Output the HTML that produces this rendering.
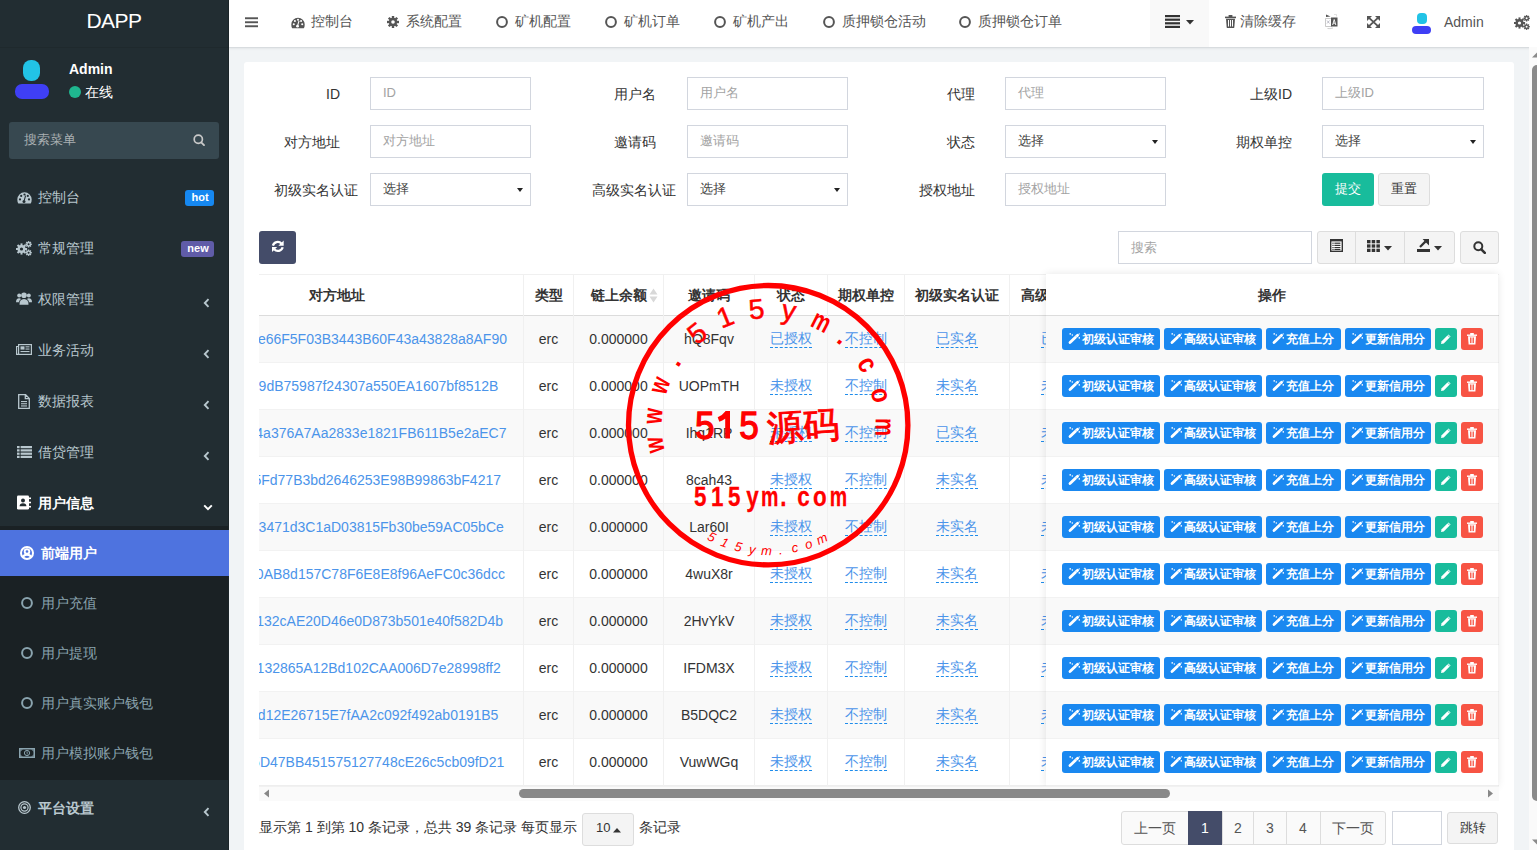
<!DOCTYPE html>
<html><head><meta charset="utf-8">
<style>
*{box-sizing:border-box;margin:0;padding:0}
html,body{width:1537px;height:850px;overflow:hidden}
body{position:relative;font-family:"Liberation Sans",sans-serif;font-size:14px;color:#333;background:#f1f4f6}
.a{position:absolute}
svg{display:block}
/* sidebar */
#sb{left:0;top:0;width:229px;height:850px;background:#222d32;border-right:1px solid #1c2529}
#logo{left:0;top:0;width:228px;height:48px;color:#fff;font-size:21px;letter-spacing:-0.5px;line-height:42px;text-align:center;border-bottom:1px solid #1f292d}
.mi{left:0;width:228px;height:50px;color:#b8c7ce;font-size:14px}
.mi .t{position:absolute;left:38px;top:0;line-height:50px}
.mi .ic{position:absolute;left:17px;top:18px}
.badge{position:absolute;color:#fff;font-size:11px;font-weight:bold;border-radius:3px;height:16px;line-height:15px;text-align:center;padding-left:1px}
.chev{position:absolute;left:203px;top:22px}
.sub{left:0;top:526px;width:228px;height:254px;background:#1a2124}
.si{left:0;width:228px;height:46px;color:#8aa4af}
.si .t{position:absolute;left:41px;top:0;line-height:46px}
/* navbar */
#nav{left:229px;top:0;width:1308px;height:48px;background:#fff;border-bottom:1px solid #d8dcdf;box-shadow:0 1px 2px rgba(0,0,0,.06)}
.nt{position:absolute;top:0;line-height:44px;color:#555;font-size:14px}

.lbl{position:absolute;color:#333;line-height:18px;white-space:nowrap}
.inp{position:absolute;width:161px;height:33px;border:1px solid #d2d6de;background:#fff}
.ph{position:absolute;left:12px;top:6px;line-height:18px;font-size:13px;color:#a3a3a3;white-space:nowrap}
.sel{color:#444}
.caret{position:absolute;right:7px;top:14px;width:0;height:0;border-left:3.5px solid transparent;border-right:3.5px solid transparent;border-top:4.5px solid #222}
.btn{position:absolute;border-radius:3px}

#tbl{left:259px;top:274px;width:1240px;height:527px;overflow:hidden}
.th{position:absolute;top:0;line-height:18px;font-weight:bold;color:#333;white-space:nowrap}
.td{position:absolute;line-height:18px;color:#333;white-space:nowrap}
.lnk{position:absolute;line-height:18px;color:#4b94ea;white-space:nowrap}
.dl{position:absolute;line-height:17px;color:#4b94ea;white-space:nowrap;border-bottom:1px dashed #1f8ceb}
.vl{position:absolute;width:1px;background:#f0f0f0}

.ob{position:absolute;height:22px;border-radius:3px;background:#1a88f0;color:#fff;font-size:12px;font-weight:bold;line-height:22px;white-space:nowrap}
.ob svg{position:absolute;left:6px;top:5px}
.ob span{position:absolute;top:0}
</style></head><body>

<!-- SIDEBAR -->

<div id="sb" class="a">
  <div id="logo" class="a">DAPP</div>
  <!-- user panel -->
  <div class="a" style="left:23px;top:60px;width:17px;height:21px;border-radius:8px;background:#22c3e6"></div>
  <div class="a" style="left:15px;top:84px;width:34px;height:15px;border-radius:7px;background:#3f3ff5"></div>
  <div class="a" style="left:69px;top:60px;color:#fff;font-weight:bold;font-size:14px;line-height:18px">Admin</div>
  <div class="a" style="left:69px;top:86px;width:12px;height:12px;border-radius:6px;background:#1fb68f"></div>
  <div class="a" style="left:85px;top:83px;color:#fff;font-size:14px;line-height:18px">在线</div>
  <!-- search -->
  <div class="a" style="left:9px;top:122px;width:210px;height:37px;border-radius:3px;background:#374850"></div>
  <div class="a" style="left:24px;top:131px;color:#aab0b3;font-size:13px;line-height:18px">搜索菜单</div>
  <svg class="a" style="left:192px;top:133px" width="14" height="14" viewBox="0 0 14 14"><circle cx="6.3" cy="6.2" r="4.1" fill="none" stroke="#c9c9c9" stroke-width="1.7"/><path d="M9.2 9.3 L12 12.1" stroke="#c9c9c9" stroke-width="1.9" stroke-linecap="round"/></svg>
  <!-- menu -->
<svg class="a" style="left:17px;top:192px" width="15" height="12" viewBox="0 0 15 12"><path d="M7.5 0.3 A7.2 7.2 0 0 0 0.3 7.5 Q0.3 10 1.3 11.6 H13.7 Q14.7 10 14.7 7.5 A7.2 7.2 0 0 0 7.5 0.3Z" fill="#b8c7ce"/><circle cx="3" cy="7.4" r="1.1" fill="#222d32"/><circle cx="4.2" cy="3.9" r="1.1" fill="#222d32"/><circle cx="7.5" cy="2.5" r="1.1" fill="#222d32"/><circle cx="10.8" cy="3.9" r="1.1" fill="#222d32"/><circle cx="12" cy="7.4" r="1.1" fill="#222d32"/><path d="M8.6 3.6 L7.2 8.6" stroke="#222d32" stroke-width="1.1"/><circle cx="7" cy="9.4" r="1.5" fill="#222d32"/></svg><div class="a" style="left:38px;top:188px;color:#b8c7ce;line-height:18px">控制台</div><div class="badge" style="left:185px;top:190px;width:29px;background:#1688f1">hot</div><svg class="a" style="left:16px;top:241px" width="16" height="15" viewBox="0 0 16 15"><g fill="#b8c7ce"><circle cx="5.5" cy="8" r="4"/><rect x="4.5" y="2.4" width="2" height="11.2"/><rect x="-0.1" y="7" width="11.2" height="2"/><rect x="4.5" y="2.4" width="2" height="11.2" transform="rotate(45 5.5 8)"/><rect x="4.5" y="2.4" width="2" height="11.2" transform="rotate(-45 5.5 8)"/></g><circle cx="5.5" cy="8" r="1.6" fill="#222d32"/><circle cx="12.6" cy="3.3" r="2.2" fill="#b8c7ce"/><rect x="11.9" y="0.09999999999999964" width="1.4" height="6.4" fill="#b8c7ce" transform="rotate(0 12.6 3.3)"/><rect x="11.9" y="0.09999999999999964" width="1.4" height="6.4" fill="#b8c7ce" transform="rotate(45 12.6 3.3)"/><rect x="11.9" y="0.09999999999999964" width="1.4" height="6.4" fill="#b8c7ce" transform="rotate(90 12.6 3.3)"/><rect x="11.9" y="0.09999999999999964" width="1.4" height="6.4" fill="#b8c7ce" transform="rotate(135 12.6 3.3)"/><circle cx="12.6" cy="3.3" r="1" fill="#222d32"/><circle cx="12.6" cy="11.7" r="2.2" fill="#b8c7ce"/><rect x="11.9" y="8.5" width="1.4" height="6.4" fill="#b8c7ce" transform="rotate(0 12.6 11.7)"/><rect x="11.9" y="8.5" width="1.4" height="6.4" fill="#b8c7ce" transform="rotate(45 12.6 11.7)"/><rect x="11.9" y="8.5" width="1.4" height="6.4" fill="#b8c7ce" transform="rotate(90 12.6 11.7)"/><rect x="11.9" y="8.5" width="1.4" height="6.4" fill="#b8c7ce" transform="rotate(135 12.6 11.7)"/><circle cx="12.6" cy="11.7" r="1" fill="#222d32"/></svg><div class="a" style="left:38px;top:239px;color:#b8c7ce;line-height:18px">常规管理</div><div class="badge" style="left:181px;top:241px;width:33px;background:#605ca8">new</div><svg class="a" style="left:16px;top:292px" width="16" height="13" viewBox="0 0 16 13"><g fill="#b8c7ce"><circle cx="8" cy="3.3" r="2.8"/><path d="M3.5 12.8 Q3.3 7.2 8 7 Q12.7 7.2 12.5 12.8Z"/><circle cx="3.2" cy="3.6" r="2"/><path d="M0 10.2 Q0 6.4 3.2 6.3 Q4.4 6.4 5 7 Q3 8.3 3 10.2Z"/><circle cx="12.8" cy="3.6" r="2"/><path d="M16 10.2 Q16 6.4 12.8 6.3 Q11.6 6.4 11 7 Q13 8.3 13 10.2Z"/></g></svg><div class="a" style="left:38px;top:290px;color:#b8c7ce;line-height:18px">权限管理</div><svg class="a" style="left:203px;top:298px" width="7" height="10" viewBox="0 0 7 10"><path d="M5.5 1.2 L1.8 5 L5.5 8.8" fill="none" stroke="#b8c7ce" stroke-width="1.9"/></svg><svg class="a" style="left:16px;top:344px" width="16" height="11" viewBox="0 0 16 11"><g fill="none" stroke="#b8c7ce" stroke-width="1.2"><rect x="2.6" y="0.6" width="12.8" height="9.8"/><path d="M2.6 2.5 H0.6 V10.4 H2.6"/></g><g fill="#b8c7ce"><rect x="4.5" y="2.3" width="4" height="3.3"/><rect x="9.5" y="2.3" width="4" height="1.1"/><rect x="9.5" y="4.5" width="4" height="1.1"/><rect x="4.5" y="7" width="9" height="1.1"/></g></svg><div class="a" style="left:38px;top:341px;color:#b8c7ce;line-height:18px">业务活动</div><svg class="a" style="left:203px;top:349px" width="7" height="10" viewBox="0 0 7 10"><path d="M5.5 1.2 L1.8 5 L5.5 8.8" fill="none" stroke="#b8c7ce" stroke-width="1.9"/></svg><svg class="a" style="left:18px;top:394px" width="12" height="15" viewBox="0 0 12 15"><path d="M0.7 0.7 H7.6 L11.3 4.4 V14.3 H0.7Z M7.3 0.9 V4.7 H11" fill="none" stroke="#b8c7ce" stroke-width="1.3"/><g fill="#b8c7ce"><rect x="3" y="7" width="6" height="1.1"/><rect x="3" y="9.2" width="6" height="1.1"/><rect x="3" y="11.4" width="6" height="1.1"/></g></svg><div class="a" style="left:38px;top:392px;color:#b8c7ce;line-height:18px">数据报表</div><svg class="a" style="left:203px;top:400px" width="7" height="10" viewBox="0 0 7 10"><path d="M5.5 1.2 L1.8 5 L5.5 8.8" fill="none" stroke="#b8c7ce" stroke-width="1.9"/></svg><svg class="a" style="left:17px;top:446px" width="15" height="12" viewBox="0 0 15 12"><g fill="#b8c7ce"><rect x="0" y="0" width="2.6" height="2.2"/><rect x="0" y="3.3" width="2.6" height="2.2"/><rect x="0" y="6.6" width="2.6" height="2.2"/><rect x="0" y="9.8" width="2.6" height="2.2"/><rect x="3.6" y="0" width="11.4" height="2.2"/><rect x="3.6" y="3.3" width="11.4" height="2.2"/><rect x="3.6" y="6.6" width="11.4" height="2.2"/><rect x="3.6" y="9.8" width="11.4" height="2.2"/></g></svg><div class="a" style="left:38px;top:443px;color:#b8c7ce;line-height:18px">借贷管理</div><svg class="a" style="left:203px;top:451px" width="7" height="10" viewBox="0 0 7 10"><path d="M5.5 1.2 L1.8 5 L5.5 8.8" fill="none" stroke="#b8c7ce" stroke-width="1.9"/></svg><svg class="a" style="left:17px;top:495px" width="14" height="15" viewBox="0 0 14 15"><rect x="0" y="0.5" width="12" height="14" rx="1.2" fill="#fff"/><g fill="#fff"><rect x="12" y="2.5" width="2" height="1.6"/><rect x="12" y="6.7" width="2" height="1.6"/><rect x="12" y="10.9" width="2" height="1.6"/></g><circle cx="6" cy="5.6" r="2" fill="#222d32"/><path d="M2.6 11.2 Q2.6 8.3 6 8.2 Q9.4 8.3 9.4 11.2Z" fill="#222d32"/></svg><div class="a" style="left:38px;top:494px;color:#fff;font-weight:bold;line-height:18px">用户信息</div><svg class="a" style="left:203px;top:504px" width="10" height="7" viewBox="0 0 10 7"><path d="M1.2 1.3 L5 5.2 L8.8 1.3" fill="none" stroke="#fff" stroke-width="1.9"/></svg><div class="a sub"></div><div class="a" style="left:0;top:530px;width:229px;height:46px;background:#4e73df"></div><svg class="a" style="left:20px;top:546px" width="14" height="14" viewBox="0 0 14 14"><circle cx="7" cy="7" r="6" fill="none" stroke="#fff" stroke-width="2"/><circle cx="7" cy="5.5" r="2.3" fill="none" stroke="#fff" stroke-width="1.9"/><path d="M2.8 11.4 Q3.8 8.6 7 8.6 Q10.2 8.6 11.2 11.4" fill="none" stroke="#fff" stroke-width="2.2"/></svg><div class="a" style="left:41px;top:544px;color:#fff;font-weight:bold;line-height:18px">前端用户</div><svg class="a" style="left:21px;top:597px" width="12" height="12" viewBox="0 0 12 12"><circle cx="6" cy="6" r="4.9" fill="none" stroke="#8aa4af" stroke-width="2"/></svg><div class="a" style="left:41px;top:594px;color:#8aa4af;line-height:18px">用户充值</div><svg class="a" style="left:21px;top:647px" width="12" height="12" viewBox="0 0 12 12"><circle cx="6" cy="6" r="4.9" fill="none" stroke="#8aa4af" stroke-width="2"/></svg><div class="a" style="left:41px;top:644px;color:#8aa4af;line-height:18px">用户提现</div><svg class="a" style="left:21px;top:697px" width="12" height="12" viewBox="0 0 12 12"><circle cx="6" cy="6" r="4.9" fill="none" stroke="#8aa4af" stroke-width="2"/></svg><div class="a" style="left:41px;top:694px;color:#8aa4af;line-height:18px">用户真实账户钱包</div><svg class="a" style="left:19px;top:748px" width="16" height="10" viewBox="0 0 16 10"><rect x="0" y="0" width="16" height="10" fill="#8aa4af"/><path d="M1.5 1.5 H14.5 V8.5 H1.5Z" fill="#1a2124"/><path d="M1.5 1.5 H4 Q1.5 2.5 1.5 4Z M14.5 1.5 H12 Q14.5 2.5 14.5 4Z M1.5 8.5 H4 Q1.5 7.5 1.5 6Z M14.5 8.5 H12 Q14.5 7.5 14.5 6Z" fill="#8aa4af"/><circle cx="8" cy="5" r="2.6" fill="none" stroke="#8aa4af" stroke-width="1"/><path d="M7.6 3.9 L8.2 3.6 V6.4" fill="none" stroke="#8aa4af" stroke-width="0.8"/></svg><div class="a" style="left:41px;top:744px;color:#8aa4af;line-height:18px">用户模拟账户钱包</div><svg class="a" style="left:18px;top:801px" width="13" height="13" viewBox="0 0 13 13"><circle cx="6.5" cy="6.5" r="5.8" fill="none" stroke="#b8c7ce" stroke-width="1.3"/><circle cx="6.5" cy="6.5" r="3.6" fill="none" stroke="#b8c7ce" stroke-width="1.2"/><circle cx="6.5" cy="6.5" r="1.6" fill="#b8c7ce"/></svg><div class="a" style="left:38px;top:799px;color:#b8c7ce;font-weight:bold;line-height:18px">平台设置</div><svg class="a" style="left:203px;top:807px" width="7" height="10" viewBox="0 0 7 10"><path d="M5.5 1.2 L1.8 5 L5.5 8.8" fill="none" stroke="#b8c7ce" stroke-width="1.9"/></svg>
</div>


<!-- NAVBAR -->
<div id="nav" class="a"></div>
<svg class="a" style="left:245px;top:17px" width="13" height="11" viewBox="0 0 13 11"><g fill="#555"><rect x="0" y="0.3" width="13" height="1.9"/><rect x="0" y="4.3" width="13" height="1.9"/><rect x="0" y="8.3" width="13" height="1.9"/></g></svg><svg class="a" style="left:291px;top:17px" width="14" height="12" viewBox="0 0 15 12"><path d="M7.5 0.3 A7.2 7.2 0 0 0 0.3 7.5 Q0.3 10 1.3 11.6 H13.7 Q14.7 10 14.7 7.5 A7.2 7.2 0 0 0 7.5 0.3Z" fill="#555"/><circle cx="3" cy="7.4" r="1.1" fill="#fff"/><circle cx="4.2" cy="3.9" r="1.1" fill="#fff"/><circle cx="7.5" cy="2.5" r="1.1" fill="#fff"/><circle cx="10.8" cy="3.9" r="1.1" fill="#fff"/><circle cx="12" cy="7.4" r="1.1" fill="#fff"/><path d="M8.6 3.6 L7.2 8.6" stroke="#fff" stroke-width="1.1"/><circle cx="7" cy="9.4" r="1.5" fill="#fff"/></svg><div class="a" style="left:311px;top:12px;color:#555;line-height:18px">控制台</div><svg class="a" style="left:387px;top:16px" width="12" height="12" viewBox="0 0 12 12"><g fill="#555"><circle cx="6" cy="6" r="4.2"/><rect x="4.8" y="0" width="2.4" height="12"/><rect x="0" y="4.8" width="12" height="2.4"/><rect x="4.8" y="0" width="2.4" height="12" transform="rotate(45 6 6)"/><rect x="4.8" y="0" width="2.4" height="12" transform="rotate(-45 6 6)"/></g><circle cx="6" cy="6" r="1.8" fill="#fff"/></svg><div class="a" style="left:406px;top:12px;color:#555;line-height:18px">系统配置</div><svg class="a" style="left:496px;top:16px" width="12" height="12" viewBox="0 0 12 12"><circle cx="6" cy="6" r="4.9" fill="none" stroke="#555" stroke-width="2"/></svg><div class="a" style="left:515px;top:12px;color:#555;line-height:18px">矿机配置</div><svg class="a" style="left:605px;top:16px" width="12" height="12" viewBox="0 0 12 12"><circle cx="6" cy="6" r="4.9" fill="none" stroke="#555" stroke-width="2"/></svg><div class="a" style="left:624px;top:12px;color:#555;line-height:18px">矿机订单</div><svg class="a" style="left:714px;top:16px" width="12" height="12" viewBox="0 0 12 12"><circle cx="6" cy="6" r="4.9" fill="none" stroke="#555" stroke-width="2"/></svg><div class="a" style="left:733px;top:12px;color:#555;line-height:18px">矿机产出</div><svg class="a" style="left:823px;top:16px" width="12" height="12" viewBox="0 0 12 12"><circle cx="6" cy="6" r="4.9" fill="none" stroke="#555" stroke-width="2"/></svg><div class="a" style="left:842px;top:12px;color:#555;line-height:18px">质押锁仓活动</div><svg class="a" style="left:959px;top:16px" width="12" height="12" viewBox="0 0 12 12"><circle cx="6" cy="6" r="4.9" fill="none" stroke="#555" stroke-width="2"/></svg><div class="a" style="left:978px;top:12px;color:#555;line-height:18px">质押锁仓订单</div><div class="a" style="left:1150px;top:0;width:59px;height:47px;background:#f9f9f9"></div><svg class="a" style="left:1165px;top:15px" width="15" height="13" viewBox="0 0 15 13"><g fill="#333"><rect x="0" y="0" width="15" height="2.2"/><rect x="0" y="3.6" width="15" height="2.2"/><rect x="0" y="7.2" width="15" height="2.2"/><rect x="0" y="10.8" width="15" height="2.2"/></g></svg><svg class="a" style="left:1186px;top:20px" width="8" height="5" viewBox="0 0 8 5"><path d="M0 0 H8 L4 4.5Z" fill="#333"/></svg><svg class="a" style="left:1225px;top:15px" width="11" height="13" viewBox="0 0 11 13"><g fill="#555"><rect x="0" y="1.6" width="11" height="1.6"/><rect x="3.6" y="0" width="3.8" height="2"/><path d="M1 3.8 H10 L9.3 12.6 Q9.2 13 8.8 13 H2.2 Q1.8 13 1.7 12.6Z"/></g><g fill="#fff"><rect x="3" y="5" width="1" height="6.5"/><rect x="5" y="5" width="1" height="6.5"/><rect x="7" y="5" width="1" height="6.5"/></g></svg><div class="a" style="left:1240px;top:12px;color:#555;line-height:18px">清除缓存</div><svg class="a" style="left:1325px;top:14px" width="14" height="16" viewBox="0 0 14 16"><path d="M0.5 4.5 H6.5 V12.5 H0.5Z" fill="#fff" stroke="#bbb" stroke-width="0.8"/><path d="M1 0.5 L5.5 2.5 L1 3Z" fill="#555"/><rect x="6" y="3.5" width="6.5" height="9" fill="#555"/><path d="M7.6 11 L9.2 5.5 L10.8 11 M8.2 9.2 H10.2" fill="none" stroke="#fff" stroke-width="0.9"/><path d="M2 6.5 L4.5 9.5 M4.5 6.5 L2 9.5" stroke="#99a" stroke-width="0.6"/><path d="M2.5 14.5 Q5 15 8 14" fill="none" stroke="#bbb" stroke-width="0.7"/><path d="M9 0.5 H11.5 V2.5" fill="none" stroke="#ccc" stroke-width="0.6"/></svg><svg class="a" style="left:1367px;top:16px" width="13" height="12" viewBox="0 0 13 12"><g fill="#555"><path d="M0 0 H5 L0 5Z"/><path d="M13 0 V5 L8 0Z"/><path d="M0 12 V7 L5 12Z"/><path d="M13 12 H8 L13 7Z"/></g><path d="M1.5 1.4 L11.5 10.6 M11.5 1.4 L1.5 10.6" stroke="#555" stroke-width="1.9"/></svg><div class="a" style="left:1417px;top:12.5px;width:9.5px;height:11.5px;border-radius:4px;background:#22c3e6"></div><div class="a" style="left:1412px;top:26px;width:19px;height:8px;border-radius:4px;background:#3f3ff5"></div><div class="a" style="left:1444px;top:13px;color:#555;line-height:18px">Admin</div><svg class="a" style="left:1514px;top:14.5px" width="16" height="15" viewBox="0 0 16 15"><g fill="#555"><circle cx="5.5" cy="8" r="4"/><rect x="4.5" y="2.4" width="2" height="11.2"/><rect x="-0.1" y="7" width="11.2" height="2"/><rect x="4.5" y="2.4" width="2" height="11.2" transform="rotate(45 5.5 8)"/><rect x="4.5" y="2.4" width="2" height="11.2" transform="rotate(-45 5.5 8)"/></g><circle cx="5.5" cy="8" r="1.6" fill="#fff"/><circle cx="12.6" cy="3.3" r="2.2" fill="#555"/><rect x="11.9" y="0.09999999999999964" width="1.4" height="6.4" fill="#555" transform="rotate(0 12.6 3.3)"/><rect x="11.9" y="0.09999999999999964" width="1.4" height="6.4" fill="#555" transform="rotate(45 12.6 3.3)"/><rect x="11.9" y="0.09999999999999964" width="1.4" height="6.4" fill="#555" transform="rotate(90 12.6 3.3)"/><rect x="11.9" y="0.09999999999999964" width="1.4" height="6.4" fill="#555" transform="rotate(135 12.6 3.3)"/><circle cx="12.6" cy="3.3" r="1" fill="#fff"/><circle cx="12.6" cy="11.7" r="2.2" fill="#555"/><rect x="11.9" y="8.5" width="1.4" height="6.4" fill="#555" transform="rotate(0 12.6 11.7)"/><rect x="11.9" y="8.5" width="1.4" height="6.4" fill="#555" transform="rotate(45 12.6 11.7)"/><rect x="11.9" y="8.5" width="1.4" height="6.4" fill="#555" transform="rotate(90 12.6 11.7)"/><rect x="11.9" y="8.5" width="1.4" height="6.4" fill="#555" transform="rotate(135 12.6 11.7)"/><circle cx="12.6" cy="11.7" r="1" fill="#fff"/></svg>

<!-- PANEL -->
<div class="a" style="left:244px;top:62px;width:1270px;height:800px;background:#fff;border-radius:3px"></div>
<div class="lbl" style="right:1197px;top:85px">ID</div><div class="inp" style="left:370px;top:77px;width:161px"><div class="ph">ID</div></div><div class="lbl" style="right:881px;top:85px">用户名</div><div class="inp" style="left:687px;top:77px;width:161px"><div class="ph">用户名</div></div><div class="lbl" style="right:562px;top:85px">代理</div><div class="inp" style="left:1005px;top:77px;width:161px"><div class="ph">代理</div></div><div class="lbl" style="right:245px;top:85px">上级ID</div><div class="inp" style="left:1322px;top:77px;width:162px"><div class="ph">上级ID</div></div><div class="lbl" style="right:1197px;top:133px">对方地址</div><div class="inp" style="left:370px;top:125px;width:161px"><div class="ph">对方地址</div></div><div class="lbl" style="right:881px;top:133px">邀请码</div><div class="inp" style="left:687px;top:125px;width:161px"><div class="ph">邀请码</div></div><div class="lbl" style="right:562px;top:133px">状态</div><div class="inp" style="left:1005px;top:125px;width:161px"><div class="ph sel">选择</div><div class="caret"></div></div><div class="lbl" style="right:245px;top:133px">期权单控</div><div class="inp" style="left:1322px;top:125px;width:162px"><div class="ph sel">选择</div><div class="caret"></div></div><div class="lbl" style="left:274px;top:181px">初级实名认证</div><div class="inp" style="left:370px;top:173px;width:161px"><div class="ph sel">选择</div><div class="caret"></div></div><div class="lbl" style="left:592px;top:181px">高级实名认证</div><div class="inp" style="left:687px;top:173px;width:161px"><div class="ph sel">选择</div><div class="caret"></div></div><div class="lbl" style="right:562px;top:181px">授权地址</div><div class="inp" style="left:1005px;top:173px;width:161px"><div class="ph">授权地址</div></div><div class="btn" style="left:1322px;top:173px;width:52px;height:33px;background:#18bc9c;color:#fff;text-align:center;line-height:31px;font-size:13px">提交</div><div class="btn" style="left:1378px;top:173px;width:52px;height:33px;background:#f4f4f4;border:1px solid #ddd;color:#333;text-align:center;line-height:30px;font-size:13px">重置</div>
<div class="btn" style="left:259px;top:231px;width:37px;height:33px;background:#444c69"></div><svg class="a" style="left:271px;top:240px" width="14" height="13" viewBox="0 0 14 13"><path d="M1.9 5.6 A5 5 0 0 1 10.4 3.6" fill="none" stroke="#fff" stroke-width="2.3"/><path d="M7.4 5.7 H12.7 V0.4Z" fill="#fff"/><path d="M11.7 7.2 A5 5 0 0 1 3.2 9.3" fill="none" stroke="#fff" stroke-width="2.3"/><path d="M1 7.1 H6.2 L1 12.1Z" fill="#fff"/></svg><div class="inp" style="left:1118px;top:231px;width:194px;height:33px"><div class="ph" style="top:7px">搜索</div></div><div class="btn" style="left:1317px;top:231px;width:138px;height:33px;background:#f4f4f4;border:1px solid #ddd"></div><div class="a" style="left:1355px;top:232px;width:1px;height:31px;background:#ddd"></div><div class="a" style="left:1404px;top:232px;width:1px;height:31px;background:#ddd"></div><svg class="a" style="left:1330px;top:239px" width="13" height="13" viewBox="0 0 13 13"><rect x="0.7" y="0.7" width="11.6" height="11.6" fill="#fff" stroke="#333" stroke-width="1.4"/><rect x="0" y="0" width="13" height="2.4" fill="#333"/><g fill="#333"><rect x="2.4" y="3.6" width="1.2" height="1.2"/><rect x="4.4" y="3.6" width="6" height="1.2"/><rect x="2.4" y="5.8" width="1.2" height="1.2"/><rect x="4.4" y="5.8" width="6" height="1.2"/><rect x="2.4" y="8" width="1.2" height="1.2"/><rect x="4.4" y="8" width="6" height="1.2"/><rect x="2.4" y="10" width="1.2" height="1"/><rect x="4.4" y="10" width="6" height="1"/></g></svg><svg class="a" style="left:1367px;top:240px" width="13" height="12" viewBox="0 0 13 12"><g fill="#333"><rect x="0" y="0" width="3.5" height="3.3"/><rect x="0" y="4.35" width="3.5" height="3.3"/><rect x="0" y="8.7" width="3.5" height="3.3"/><rect x="4.7" y="0" width="3.5" height="3.3"/><rect x="4.7" y="4.35" width="3.5" height="3.3"/><rect x="4.7" y="8.7" width="3.5" height="3.3"/><rect x="9.4" y="0" width="3.5" height="3.3"/><rect x="9.4" y="4.35" width="3.5" height="3.3"/><rect x="9.4" y="8.7" width="3.5" height="3.3"/></g></svg><svg class="a" style="left:1384px;top:245.5px" width="8" height="5" viewBox="0 0 8 5"><path d="M0 0 H8 L4 4.5Z" fill="#333"/></svg><svg class="a" style="left:1417px;top:239px" width="13" height="13" viewBox="0 0 13 13"><rect x="0" y="10" width="13" height="3" fill="#333"/><path d="M3 8 L8.6 2.4" stroke="#333" stroke-width="2.2"/><path d="M5.6 0 H12 V6.4Z" fill="#333"/></svg><svg class="a" style="left:1434px;top:245.5px" width="8" height="5" viewBox="0 0 8 5"><path d="M0 0 H8 L4 4.5Z" fill="#333"/></svg><div class="btn" style="left:1460px;top:231px;width:39px;height:33px;background:#f4f4f4;border:1px solid #ddd"></div><svg class="a" style="left:1473px;top:241px" width="13" height="13" viewBox="0 0 13 13"><circle cx="5.3" cy="5.3" r="4" fill="none" stroke="#333" stroke-width="2"/><path d="M8.3 8.3 L11.8 11.8" stroke="#333" stroke-width="2.6" stroke-linecap="round"/></svg>
<div id="tbl" class="a"><div class="a" style="left:0;top:0;width:1240px;height:1px;background:#f0f0f0"></div><div class="a" style="left:0;top:41px;width:1240px;height:1px;background:#dcdcdc"></div><div class="a" style="left:0;top:42px;width:1240px;height:47px;background:#f9f9f9"></div><div class="a" style="left:0;top:89px;width:1240px;height:47px;background:#fff"></div><div class="a" style="left:0;top:88px;width:1240px;height:1px;background:#f2f2f2"></div><div class="a" style="left:0;top:136px;width:1240px;height:47px;background:#f9f9f9"></div><div class="a" style="left:0;top:135px;width:1240px;height:1px;background:#f2f2f2"></div><div class="a" style="left:0;top:183px;width:1240px;height:47px;background:#fff"></div><div class="a" style="left:0;top:182px;width:1240px;height:1px;background:#f2f2f2"></div><div class="a" style="left:0;top:230px;width:1240px;height:47px;background:#f9f9f9"></div><div class="a" style="left:0;top:229px;width:1240px;height:1px;background:#f2f2f2"></div><div class="a" style="left:0;top:277px;width:1240px;height:47px;background:#fff"></div><div class="a" style="left:0;top:276px;width:1240px;height:1px;background:#f2f2f2"></div><div class="a" style="left:0;top:324px;width:1240px;height:47px;background:#f9f9f9"></div><div class="a" style="left:0;top:323px;width:1240px;height:1px;background:#f2f2f2"></div><div class="a" style="left:0;top:371px;width:1240px;height:47px;background:#fff"></div><div class="a" style="left:0;top:370px;width:1240px;height:1px;background:#f2f2f2"></div><div class="a" style="left:0;top:418px;width:1240px;height:47px;background:#f9f9f9"></div><div class="a" style="left:0;top:417px;width:1240px;height:1px;background:#f2f2f2"></div><div class="a" style="left:0;top:465px;width:1240px;height:47px;background:#fff"></div><div class="a" style="left:0;top:464px;width:1240px;height:1px;background:#f2f2f2"></div><div class="a" style="left:0;top:511px;width:1240px;height:1px;background:#eee"></div><div class="vl" style="left:264px;top:0;height:512px"></div><div class="vl" style="left:314px;top:0;height:512px"></div><div class="vl" style="left:404px;top:0;height:512px"></div><div class="vl" style="left:495px;top:0;height:512px"></div><div class="vl" style="left:568px;top:0;height:512px"></div><div class="vl" style="left:645px;top:0;height:512px"></div><div class="vl" style="left:750px;top:0;height:512px"></div><div class="vl" style="left:856px;top:0;height:512px"></div><div class="th" style="left:-22px;top:12px;width:200px;text-align:center">对方地址</div><div class="th" style="left:259.5px;top:12px;width:60px;text-align:center">类型</div><div class="th" style="left:332px;top:12px">链上余额</div><svg class="a" style="left:390px;top:14px" width="9" height="15" viewBox="0 0 9 15"><path d="M4.5 0.5 L8.5 6.5 H0.5Z M4.5 14.5 L8.5 8.5 H0.5Z" fill="#d8d8d8"/></svg><div class="th" style="left:410px;top:12px;width:80px;text-align:center">邀请码</div><div class="th" style="left:497px;top:12px;width:70px;text-align:center">状态</div><div class="th" style="left:569px;top:12px;width:76px;text-align:center">期权单控</div><div class="th" style="left:648px;top:12px;width:100px;text-align:center">初级实名认证</div><div class="th" style="left:762px;top:12px">高级实名认证</div><div class="lnk" style="right:992px;top:56px">0x7a2B9cA01dE53e66F5F03B3443B60F43a43828a8AF90</div><div class="td" style="left:264.5px;top:56px;width:50px;text-align:center">erc</div><div class="td" style="left:314.5px;top:56px;width:90px;text-align:center">0.000000</div><div class="td" style="left:405px;top:56px;width:90px;text-align:center">hQ8Fqv</div><div class="dl" style="left:511px;top:56px">已授权</div><div class="dl" style="left:586px;top:56px">不控制</div><div class="dl" style="left:677px;top:56px">已实名</div><div class="dl" style="left:782px;top:56px">已实名</div><div class="lnk" style="right:1000.6px;top:103px">0x5cE19aB83fD079dB75987f24307a550EA1607bf8512B</div><div class="td" style="left:264.5px;top:103px;width:50px;text-align:center">erc</div><div class="td" style="left:314.5px;top:103px;width:90px;text-align:center">0.000000</div><div class="td" style="left:405px;top:103px;width:90px;text-align:center">UOPmTH</div><div class="dl" style="left:511px;top:103px">未授权</div><div class="dl" style="left:586px;top:103px">不控制</div><div class="dl" style="left:677px;top:103px">未实名</div><div class="dl" style="left:782px;top:103px">未实名</div><div class="lnk" style="right:992.5px;top:150px">0x3bF26dC14aE904a376A7Aa2833e1821FB611B5e2aEC7</div><div class="td" style="left:264.5px;top:150px;width:50px;text-align:center">erc</div><div class="td" style="left:314.5px;top:150px;width:90px;text-align:center">0.000000</div><div class="td" style="left:405px;top:150px;width:90px;text-align:center">Ihq1RP</div><div class="dl" style="left:511px;top:150px">未授权</div><div class="dl" style="left:586px;top:150px">不控制</div><div class="dl" style="left:677px;top:150px">已实名</div><div class="dl" style="left:782px;top:150px">未实名</div><div class="lnk" style="right:998px;top:197px">0x91aD4eF23bC65Fd77B3bd2646253E98B99863bF4217</div><div class="td" style="left:264.5px;top:197px;width:50px;text-align:center">erc</div><div class="td" style="left:314.5px;top:197px;width:90px;text-align:center">0.000000</div><div class="td" style="left:405px;top:197px;width:90px;text-align:center">8cah43</div><div class="dl" style="left:511px;top:197px">未授权</div><div class="dl" style="left:586px;top:197px">不控制</div><div class="dl" style="left:677px;top:197px">未实名</div><div class="dl" style="left:782px;top:197px">未实名</div><div class="lnk" style="right:995.2px;top:244px">0x2eC87bA45dF123471d3C1aD03815Fb30be59AC05bCe</div><div class="td" style="left:264.5px;top:244px;width:50px;text-align:center">erc</div><div class="td" style="left:314.5px;top:244px;width:90px;text-align:center">0.000000</div><div class="td" style="left:405px;top:244px;width:90px;text-align:center">Lar60I</div><div class="dl" style="left:511px;top:244px">未授权</div><div class="dl" style="left:586px;top:244px">不控制</div><div class="dl" style="left:677px;top:244px">未实名</div><div class="dl" style="left:782px;top:244px">未实名</div><div class="lnk" style="right:994.1px;top:291px">0x6fB34aD29eC80AB8d157C78F6E8E8f96AeFC0c36dcc</div><div class="td" style="left:264.5px;top:291px;width:50px;text-align:center">erc</div><div class="td" style="left:314.5px;top:291px;width:90px;text-align:center">0.000000</div><div class="td" style="left:405px;top:291px;width:90px;text-align:center">4wuX8r</div><div class="dl" style="left:511px;top:291px">未授权</div><div class="dl" style="left:586px;top:291px">不控制</div><div class="dl" style="left:677px;top:291px">未实名</div><div class="dl" style="left:782px;top:291px">未实名</div><div class="lnk" style="right:996px;top:338px">0x8dA52cE71fB3132cAE20D46e0D873b501e40f582D4b</div><div class="td" style="left:264.5px;top:338px;width:50px;text-align:center">erc</div><div class="td" style="left:314.5px;top:338px;width:90px;text-align:center">0.000000</div><div class="td" style="left:405px;top:338px;width:90px;text-align:center">2HvYkV</div><div class="dl" style="left:511px;top:338px">未授权</div><div class="dl" style="left:586px;top:338px">不控制</div><div class="dl" style="left:677px;top:338px">未实名</div><div class="dl" style="left:782px;top:338px">未实名</div><div class="lnk" style="right:998.2px;top:385px">0x4aC91bF36eD2132865A12Bd102CAA006D7e28998ff2</div><div class="td" style="left:264.5px;top:385px;width:50px;text-align:center">erc</div><div class="td" style="left:314.5px;top:385px;width:90px;text-align:center">0.000000</div><div class="td" style="left:405px;top:385px;width:90px;text-align:center">IFDM3X</div><div class="dl" style="left:511px;top:385px">未授权</div><div class="dl" style="left:586px;top:385px">不控制</div><div class="dl" style="left:677px;top:385px">未实名</div><div class="dl" style="left:782px;top:385px">未实名</div><div class="lnk" style="right:1000.6px;top:432px">0x7bE25dA84cF9d12E26715E7fAA2c092f492ab0191B5</div><div class="td" style="left:264.5px;top:432px;width:50px;text-align:center">erc</div><div class="td" style="left:314.5px;top:432px;width:90px;text-align:center">0.000000</div><div class="td" style="left:405px;top:432px;width:90px;text-align:center">B5DQC2</div><div class="dl" style="left:511px;top:432px">未授权</div><div class="dl" style="left:586px;top:432px">不控制</div><div class="dl" style="left:677px;top:432px">未实名</div><div class="dl" style="left:782px;top:432px">未实名</div><div class="lnk" style="right:994.7px;top:479px">0x1cF63eB92aD5D47BB451575127748cE26c5cb09fD21</div><div class="td" style="left:264.5px;top:479px;width:50px;text-align:center">erc</div><div class="td" style="left:314.5px;top:479px;width:90px;text-align:center">0.000000</div><div class="td" style="left:405px;top:479px;width:90px;text-align:center">VuwWGq</div><div class="dl" style="left:511px;top:479px">未授权</div><div class="dl" style="left:586px;top:479px">不控制</div><div class="dl" style="left:677px;top:479px">未实名</div><div class="dl" style="left:782px;top:479px">未实名</div><div class="a" style="left:0;top:512px;width:1240px;height:15px;background:#fafafa;border-top:1px solid #f1f1f1;z-index:2"></div><svg class="a" style="left:4px;top:515px;z-index:3" width="7" height="9" viewBox="0 0 7 9"><path d="M6 0.5 V8.5 L1 4.5Z" fill="#888"/></svg><svg class="a" style="left:1228px;top:515px;z-index:3" width="7" height="9" viewBox="0 0 7 9"><path d="M1 0.5 V8.5 L6 4.5Z" fill="#888"/></svg><div class="a" style="left:260px;top:515px;width:651px;height:9px;border-radius:4.5px;background:#888;z-index:3"></div></div>
<div class="a" style="left:1046px;top:274px;width:452px;height:512px;background:#fff;box-shadow:0 0 8px rgba(0,0,0,.1)"><div class="a" style="left:0;top:41px;width:452px;height:1px;background:#dcdcdc"></div><div class="th" style="left:186px;top:12px;width:80px;text-align:center">操作</div><div class="a" style="left:0;top:42px;width:452px;height:47px;background:#f9f9f9"></div><div class="ob" style="left:16px;top:54px;width:98px"><svg width="13" height="12" viewBox="0 0 13 12"><path d="M2 9.6 L9.6 2.2" stroke="#fff" stroke-width="2.8" stroke-linecap="round"/><g fill="#fff"><circle cx="2.2" cy="0.9" r="0.8"/><circle cx="4.3" cy="1.9" r="0.75"/><circle cx="11.3" cy="4.9" r="0.8"/><circle cx="11.2" cy="0.9" r="0.6"/></g><path d="M8.2 3.6 L9.2 4.6" stroke="#1a88f0" stroke-width="0.7"/></svg><span style="left:20px">初级认证审核</span></div><div class="ob" style="left:118px;top:54px;width:98px"><svg width="13" height="12" viewBox="0 0 13 12"><path d="M2 9.6 L9.6 2.2" stroke="#fff" stroke-width="2.8" stroke-linecap="round"/><g fill="#fff"><circle cx="2.2" cy="0.9" r="0.8"/><circle cx="4.3" cy="1.9" r="0.75"/><circle cx="11.3" cy="4.9" r="0.8"/><circle cx="11.2" cy="0.9" r="0.6"/></g><path d="M8.2 3.6 L9.2 4.6" stroke="#1a88f0" stroke-width="0.7"/></svg><span style="left:20px">高级认证审核</span></div><div class="ob" style="left:220px;top:54px;width:75px"><svg width="13" height="12" viewBox="0 0 13 12"><path d="M2 9.6 L9.6 2.2" stroke="#fff" stroke-width="2.8" stroke-linecap="round"/><g fill="#fff"><circle cx="2.2" cy="0.9" r="0.8"/><circle cx="4.3" cy="1.9" r="0.75"/><circle cx="11.3" cy="4.9" r="0.8"/><circle cx="11.2" cy="0.9" r="0.6"/></g><path d="M8.2 3.6 L9.2 4.6" stroke="#1a88f0" stroke-width="0.7"/></svg><span style="left:20px">充值上分</span></div><div class="ob" style="left:299px;top:54px;width:86px"><svg width="13" height="12" viewBox="0 0 13 12"><path d="M2 9.6 L9.6 2.2" stroke="#fff" stroke-width="2.8" stroke-linecap="round"/><g fill="#fff"><circle cx="2.2" cy="0.9" r="0.8"/><circle cx="4.3" cy="1.9" r="0.75"/><circle cx="11.3" cy="4.9" r="0.8"/><circle cx="11.2" cy="0.9" r="0.6"/></g><path d="M8.2 3.6 L9.2 4.6" stroke="#1a88f0" stroke-width="0.7"/></svg><span style="left:20px">更新信用分</span></div><div class="ob" style="left:389px;top:54px;width:22px;background:#18bc9c"><svg width="12" height="12" viewBox="0 0 12 12" style="left:5px;top:5px"><path d="M1 11 L1.6 8.2 L8.4 1.4 L10.6 3.6 L3.8 10.4Z" fill="#fff"/><path d="M7.6 2.2 L9.8 4.4" stroke="#18bc9c" stroke-width="0.8"/></svg></div><div class="ob" style="left:415px;top:54px;width:22px;background:#f75444"><svg width="10" height="12" viewBox="0 0 10 12" style="left:6px;top:5px"><g fill="#fff"><rect x="0" y="1.5" width="10" height="1.4"/><rect x="3.2" y="0" width="3.6" height="2"/><path d="M1 3.3 H9 L8.4 11.6 H1.6Z"/></g><g fill="#f75444"><rect x="3" y="4.5" width="0.9" height="5.6"/><rect x="4.55" y="4.5" width="0.9" height="5.6"/><rect x="6.1" y="4.5" width="0.9" height="5.6"/></g></svg></div><div class="a" style="left:0;top:89px;width:452px;height:47px;background:#fff"></div><div class="a" style="left:0;top:88px;width:452px;height:1px;background:#f2f2f2"></div><div class="ob" style="left:16px;top:101px;width:98px"><svg width="13" height="12" viewBox="0 0 13 12"><path d="M2 9.6 L9.6 2.2" stroke="#fff" stroke-width="2.8" stroke-linecap="round"/><g fill="#fff"><circle cx="2.2" cy="0.9" r="0.8"/><circle cx="4.3" cy="1.9" r="0.75"/><circle cx="11.3" cy="4.9" r="0.8"/><circle cx="11.2" cy="0.9" r="0.6"/></g><path d="M8.2 3.6 L9.2 4.6" stroke="#1a88f0" stroke-width="0.7"/></svg><span style="left:20px">初级认证审核</span></div><div class="ob" style="left:118px;top:101px;width:98px"><svg width="13" height="12" viewBox="0 0 13 12"><path d="M2 9.6 L9.6 2.2" stroke="#fff" stroke-width="2.8" stroke-linecap="round"/><g fill="#fff"><circle cx="2.2" cy="0.9" r="0.8"/><circle cx="4.3" cy="1.9" r="0.75"/><circle cx="11.3" cy="4.9" r="0.8"/><circle cx="11.2" cy="0.9" r="0.6"/></g><path d="M8.2 3.6 L9.2 4.6" stroke="#1a88f0" stroke-width="0.7"/></svg><span style="left:20px">高级认证审核</span></div><div class="ob" style="left:220px;top:101px;width:75px"><svg width="13" height="12" viewBox="0 0 13 12"><path d="M2 9.6 L9.6 2.2" stroke="#fff" stroke-width="2.8" stroke-linecap="round"/><g fill="#fff"><circle cx="2.2" cy="0.9" r="0.8"/><circle cx="4.3" cy="1.9" r="0.75"/><circle cx="11.3" cy="4.9" r="0.8"/><circle cx="11.2" cy="0.9" r="0.6"/></g><path d="M8.2 3.6 L9.2 4.6" stroke="#1a88f0" stroke-width="0.7"/></svg><span style="left:20px">充值上分</span></div><div class="ob" style="left:299px;top:101px;width:86px"><svg width="13" height="12" viewBox="0 0 13 12"><path d="M2 9.6 L9.6 2.2" stroke="#fff" stroke-width="2.8" stroke-linecap="round"/><g fill="#fff"><circle cx="2.2" cy="0.9" r="0.8"/><circle cx="4.3" cy="1.9" r="0.75"/><circle cx="11.3" cy="4.9" r="0.8"/><circle cx="11.2" cy="0.9" r="0.6"/></g><path d="M8.2 3.6 L9.2 4.6" stroke="#1a88f0" stroke-width="0.7"/></svg><span style="left:20px">更新信用分</span></div><div class="ob" style="left:389px;top:101px;width:22px;background:#18bc9c"><svg width="12" height="12" viewBox="0 0 12 12" style="left:5px;top:5px"><path d="M1 11 L1.6 8.2 L8.4 1.4 L10.6 3.6 L3.8 10.4Z" fill="#fff"/><path d="M7.6 2.2 L9.8 4.4" stroke="#18bc9c" stroke-width="0.8"/></svg></div><div class="ob" style="left:415px;top:101px;width:22px;background:#f75444"><svg width="10" height="12" viewBox="0 0 10 12" style="left:6px;top:5px"><g fill="#fff"><rect x="0" y="1.5" width="10" height="1.4"/><rect x="3.2" y="0" width="3.6" height="2"/><path d="M1 3.3 H9 L8.4 11.6 H1.6Z"/></g><g fill="#f75444"><rect x="3" y="4.5" width="0.9" height="5.6"/><rect x="4.55" y="4.5" width="0.9" height="5.6"/><rect x="6.1" y="4.5" width="0.9" height="5.6"/></g></svg></div><div class="a" style="left:0;top:136px;width:452px;height:47px;background:#f9f9f9"></div><div class="a" style="left:0;top:135px;width:452px;height:1px;background:#f2f2f2"></div><div class="ob" style="left:16px;top:148px;width:98px"><svg width="13" height="12" viewBox="0 0 13 12"><path d="M2 9.6 L9.6 2.2" stroke="#fff" stroke-width="2.8" stroke-linecap="round"/><g fill="#fff"><circle cx="2.2" cy="0.9" r="0.8"/><circle cx="4.3" cy="1.9" r="0.75"/><circle cx="11.3" cy="4.9" r="0.8"/><circle cx="11.2" cy="0.9" r="0.6"/></g><path d="M8.2 3.6 L9.2 4.6" stroke="#1a88f0" stroke-width="0.7"/></svg><span style="left:20px">初级认证审核</span></div><div class="ob" style="left:118px;top:148px;width:98px"><svg width="13" height="12" viewBox="0 0 13 12"><path d="M2 9.6 L9.6 2.2" stroke="#fff" stroke-width="2.8" stroke-linecap="round"/><g fill="#fff"><circle cx="2.2" cy="0.9" r="0.8"/><circle cx="4.3" cy="1.9" r="0.75"/><circle cx="11.3" cy="4.9" r="0.8"/><circle cx="11.2" cy="0.9" r="0.6"/></g><path d="M8.2 3.6 L9.2 4.6" stroke="#1a88f0" stroke-width="0.7"/></svg><span style="left:20px">高级认证审核</span></div><div class="ob" style="left:220px;top:148px;width:75px"><svg width="13" height="12" viewBox="0 0 13 12"><path d="M2 9.6 L9.6 2.2" stroke="#fff" stroke-width="2.8" stroke-linecap="round"/><g fill="#fff"><circle cx="2.2" cy="0.9" r="0.8"/><circle cx="4.3" cy="1.9" r="0.75"/><circle cx="11.3" cy="4.9" r="0.8"/><circle cx="11.2" cy="0.9" r="0.6"/></g><path d="M8.2 3.6 L9.2 4.6" stroke="#1a88f0" stroke-width="0.7"/></svg><span style="left:20px">充值上分</span></div><div class="ob" style="left:299px;top:148px;width:86px"><svg width="13" height="12" viewBox="0 0 13 12"><path d="M2 9.6 L9.6 2.2" stroke="#fff" stroke-width="2.8" stroke-linecap="round"/><g fill="#fff"><circle cx="2.2" cy="0.9" r="0.8"/><circle cx="4.3" cy="1.9" r="0.75"/><circle cx="11.3" cy="4.9" r="0.8"/><circle cx="11.2" cy="0.9" r="0.6"/></g><path d="M8.2 3.6 L9.2 4.6" stroke="#1a88f0" stroke-width="0.7"/></svg><span style="left:20px">更新信用分</span></div><div class="ob" style="left:389px;top:148px;width:22px;background:#18bc9c"><svg width="12" height="12" viewBox="0 0 12 12" style="left:5px;top:5px"><path d="M1 11 L1.6 8.2 L8.4 1.4 L10.6 3.6 L3.8 10.4Z" fill="#fff"/><path d="M7.6 2.2 L9.8 4.4" stroke="#18bc9c" stroke-width="0.8"/></svg></div><div class="ob" style="left:415px;top:148px;width:22px;background:#f75444"><svg width="10" height="12" viewBox="0 0 10 12" style="left:6px;top:5px"><g fill="#fff"><rect x="0" y="1.5" width="10" height="1.4"/><rect x="3.2" y="0" width="3.6" height="2"/><path d="M1 3.3 H9 L8.4 11.6 H1.6Z"/></g><g fill="#f75444"><rect x="3" y="4.5" width="0.9" height="5.6"/><rect x="4.55" y="4.5" width="0.9" height="5.6"/><rect x="6.1" y="4.5" width="0.9" height="5.6"/></g></svg></div><div class="a" style="left:0;top:183px;width:452px;height:47px;background:#fff"></div><div class="a" style="left:0;top:182px;width:452px;height:1px;background:#f2f2f2"></div><div class="ob" style="left:16px;top:195px;width:98px"><svg width="13" height="12" viewBox="0 0 13 12"><path d="M2 9.6 L9.6 2.2" stroke="#fff" stroke-width="2.8" stroke-linecap="round"/><g fill="#fff"><circle cx="2.2" cy="0.9" r="0.8"/><circle cx="4.3" cy="1.9" r="0.75"/><circle cx="11.3" cy="4.9" r="0.8"/><circle cx="11.2" cy="0.9" r="0.6"/></g><path d="M8.2 3.6 L9.2 4.6" stroke="#1a88f0" stroke-width="0.7"/></svg><span style="left:20px">初级认证审核</span></div><div class="ob" style="left:118px;top:195px;width:98px"><svg width="13" height="12" viewBox="0 0 13 12"><path d="M2 9.6 L9.6 2.2" stroke="#fff" stroke-width="2.8" stroke-linecap="round"/><g fill="#fff"><circle cx="2.2" cy="0.9" r="0.8"/><circle cx="4.3" cy="1.9" r="0.75"/><circle cx="11.3" cy="4.9" r="0.8"/><circle cx="11.2" cy="0.9" r="0.6"/></g><path d="M8.2 3.6 L9.2 4.6" stroke="#1a88f0" stroke-width="0.7"/></svg><span style="left:20px">高级认证审核</span></div><div class="ob" style="left:220px;top:195px;width:75px"><svg width="13" height="12" viewBox="0 0 13 12"><path d="M2 9.6 L9.6 2.2" stroke="#fff" stroke-width="2.8" stroke-linecap="round"/><g fill="#fff"><circle cx="2.2" cy="0.9" r="0.8"/><circle cx="4.3" cy="1.9" r="0.75"/><circle cx="11.3" cy="4.9" r="0.8"/><circle cx="11.2" cy="0.9" r="0.6"/></g><path d="M8.2 3.6 L9.2 4.6" stroke="#1a88f0" stroke-width="0.7"/></svg><span style="left:20px">充值上分</span></div><div class="ob" style="left:299px;top:195px;width:86px"><svg width="13" height="12" viewBox="0 0 13 12"><path d="M2 9.6 L9.6 2.2" stroke="#fff" stroke-width="2.8" stroke-linecap="round"/><g fill="#fff"><circle cx="2.2" cy="0.9" r="0.8"/><circle cx="4.3" cy="1.9" r="0.75"/><circle cx="11.3" cy="4.9" r="0.8"/><circle cx="11.2" cy="0.9" r="0.6"/></g><path d="M8.2 3.6 L9.2 4.6" stroke="#1a88f0" stroke-width="0.7"/></svg><span style="left:20px">更新信用分</span></div><div class="ob" style="left:389px;top:195px;width:22px;background:#18bc9c"><svg width="12" height="12" viewBox="0 0 12 12" style="left:5px;top:5px"><path d="M1 11 L1.6 8.2 L8.4 1.4 L10.6 3.6 L3.8 10.4Z" fill="#fff"/><path d="M7.6 2.2 L9.8 4.4" stroke="#18bc9c" stroke-width="0.8"/></svg></div><div class="ob" style="left:415px;top:195px;width:22px;background:#f75444"><svg width="10" height="12" viewBox="0 0 10 12" style="left:6px;top:5px"><g fill="#fff"><rect x="0" y="1.5" width="10" height="1.4"/><rect x="3.2" y="0" width="3.6" height="2"/><path d="M1 3.3 H9 L8.4 11.6 H1.6Z"/></g><g fill="#f75444"><rect x="3" y="4.5" width="0.9" height="5.6"/><rect x="4.55" y="4.5" width="0.9" height="5.6"/><rect x="6.1" y="4.5" width="0.9" height="5.6"/></g></svg></div><div class="a" style="left:0;top:230px;width:452px;height:47px;background:#f9f9f9"></div><div class="a" style="left:0;top:229px;width:452px;height:1px;background:#f2f2f2"></div><div class="ob" style="left:16px;top:242px;width:98px"><svg width="13" height="12" viewBox="0 0 13 12"><path d="M2 9.6 L9.6 2.2" stroke="#fff" stroke-width="2.8" stroke-linecap="round"/><g fill="#fff"><circle cx="2.2" cy="0.9" r="0.8"/><circle cx="4.3" cy="1.9" r="0.75"/><circle cx="11.3" cy="4.9" r="0.8"/><circle cx="11.2" cy="0.9" r="0.6"/></g><path d="M8.2 3.6 L9.2 4.6" stroke="#1a88f0" stroke-width="0.7"/></svg><span style="left:20px">初级认证审核</span></div><div class="ob" style="left:118px;top:242px;width:98px"><svg width="13" height="12" viewBox="0 0 13 12"><path d="M2 9.6 L9.6 2.2" stroke="#fff" stroke-width="2.8" stroke-linecap="round"/><g fill="#fff"><circle cx="2.2" cy="0.9" r="0.8"/><circle cx="4.3" cy="1.9" r="0.75"/><circle cx="11.3" cy="4.9" r="0.8"/><circle cx="11.2" cy="0.9" r="0.6"/></g><path d="M8.2 3.6 L9.2 4.6" stroke="#1a88f0" stroke-width="0.7"/></svg><span style="left:20px">高级认证审核</span></div><div class="ob" style="left:220px;top:242px;width:75px"><svg width="13" height="12" viewBox="0 0 13 12"><path d="M2 9.6 L9.6 2.2" stroke="#fff" stroke-width="2.8" stroke-linecap="round"/><g fill="#fff"><circle cx="2.2" cy="0.9" r="0.8"/><circle cx="4.3" cy="1.9" r="0.75"/><circle cx="11.3" cy="4.9" r="0.8"/><circle cx="11.2" cy="0.9" r="0.6"/></g><path d="M8.2 3.6 L9.2 4.6" stroke="#1a88f0" stroke-width="0.7"/></svg><span style="left:20px">充值上分</span></div><div class="ob" style="left:299px;top:242px;width:86px"><svg width="13" height="12" viewBox="0 0 13 12"><path d="M2 9.6 L9.6 2.2" stroke="#fff" stroke-width="2.8" stroke-linecap="round"/><g fill="#fff"><circle cx="2.2" cy="0.9" r="0.8"/><circle cx="4.3" cy="1.9" r="0.75"/><circle cx="11.3" cy="4.9" r="0.8"/><circle cx="11.2" cy="0.9" r="0.6"/></g><path d="M8.2 3.6 L9.2 4.6" stroke="#1a88f0" stroke-width="0.7"/></svg><span style="left:20px">更新信用分</span></div><div class="ob" style="left:389px;top:242px;width:22px;background:#18bc9c"><svg width="12" height="12" viewBox="0 0 12 12" style="left:5px;top:5px"><path d="M1 11 L1.6 8.2 L8.4 1.4 L10.6 3.6 L3.8 10.4Z" fill="#fff"/><path d="M7.6 2.2 L9.8 4.4" stroke="#18bc9c" stroke-width="0.8"/></svg></div><div class="ob" style="left:415px;top:242px;width:22px;background:#f75444"><svg width="10" height="12" viewBox="0 0 10 12" style="left:6px;top:5px"><g fill="#fff"><rect x="0" y="1.5" width="10" height="1.4"/><rect x="3.2" y="0" width="3.6" height="2"/><path d="M1 3.3 H9 L8.4 11.6 H1.6Z"/></g><g fill="#f75444"><rect x="3" y="4.5" width="0.9" height="5.6"/><rect x="4.55" y="4.5" width="0.9" height="5.6"/><rect x="6.1" y="4.5" width="0.9" height="5.6"/></g></svg></div><div class="a" style="left:0;top:277px;width:452px;height:47px;background:#fff"></div><div class="a" style="left:0;top:276px;width:452px;height:1px;background:#f2f2f2"></div><div class="ob" style="left:16px;top:289px;width:98px"><svg width="13" height="12" viewBox="0 0 13 12"><path d="M2 9.6 L9.6 2.2" stroke="#fff" stroke-width="2.8" stroke-linecap="round"/><g fill="#fff"><circle cx="2.2" cy="0.9" r="0.8"/><circle cx="4.3" cy="1.9" r="0.75"/><circle cx="11.3" cy="4.9" r="0.8"/><circle cx="11.2" cy="0.9" r="0.6"/></g><path d="M8.2 3.6 L9.2 4.6" stroke="#1a88f0" stroke-width="0.7"/></svg><span style="left:20px">初级认证审核</span></div><div class="ob" style="left:118px;top:289px;width:98px"><svg width="13" height="12" viewBox="0 0 13 12"><path d="M2 9.6 L9.6 2.2" stroke="#fff" stroke-width="2.8" stroke-linecap="round"/><g fill="#fff"><circle cx="2.2" cy="0.9" r="0.8"/><circle cx="4.3" cy="1.9" r="0.75"/><circle cx="11.3" cy="4.9" r="0.8"/><circle cx="11.2" cy="0.9" r="0.6"/></g><path d="M8.2 3.6 L9.2 4.6" stroke="#1a88f0" stroke-width="0.7"/></svg><span style="left:20px">高级认证审核</span></div><div class="ob" style="left:220px;top:289px;width:75px"><svg width="13" height="12" viewBox="0 0 13 12"><path d="M2 9.6 L9.6 2.2" stroke="#fff" stroke-width="2.8" stroke-linecap="round"/><g fill="#fff"><circle cx="2.2" cy="0.9" r="0.8"/><circle cx="4.3" cy="1.9" r="0.75"/><circle cx="11.3" cy="4.9" r="0.8"/><circle cx="11.2" cy="0.9" r="0.6"/></g><path d="M8.2 3.6 L9.2 4.6" stroke="#1a88f0" stroke-width="0.7"/></svg><span style="left:20px">充值上分</span></div><div class="ob" style="left:299px;top:289px;width:86px"><svg width="13" height="12" viewBox="0 0 13 12"><path d="M2 9.6 L9.6 2.2" stroke="#fff" stroke-width="2.8" stroke-linecap="round"/><g fill="#fff"><circle cx="2.2" cy="0.9" r="0.8"/><circle cx="4.3" cy="1.9" r="0.75"/><circle cx="11.3" cy="4.9" r="0.8"/><circle cx="11.2" cy="0.9" r="0.6"/></g><path d="M8.2 3.6 L9.2 4.6" stroke="#1a88f0" stroke-width="0.7"/></svg><span style="left:20px">更新信用分</span></div><div class="ob" style="left:389px;top:289px;width:22px;background:#18bc9c"><svg width="12" height="12" viewBox="0 0 12 12" style="left:5px;top:5px"><path d="M1 11 L1.6 8.2 L8.4 1.4 L10.6 3.6 L3.8 10.4Z" fill="#fff"/><path d="M7.6 2.2 L9.8 4.4" stroke="#18bc9c" stroke-width="0.8"/></svg></div><div class="ob" style="left:415px;top:289px;width:22px;background:#f75444"><svg width="10" height="12" viewBox="0 0 10 12" style="left:6px;top:5px"><g fill="#fff"><rect x="0" y="1.5" width="10" height="1.4"/><rect x="3.2" y="0" width="3.6" height="2"/><path d="M1 3.3 H9 L8.4 11.6 H1.6Z"/></g><g fill="#f75444"><rect x="3" y="4.5" width="0.9" height="5.6"/><rect x="4.55" y="4.5" width="0.9" height="5.6"/><rect x="6.1" y="4.5" width="0.9" height="5.6"/></g></svg></div><div class="a" style="left:0;top:324px;width:452px;height:47px;background:#f9f9f9"></div><div class="a" style="left:0;top:323px;width:452px;height:1px;background:#f2f2f2"></div><div class="ob" style="left:16px;top:336px;width:98px"><svg width="13" height="12" viewBox="0 0 13 12"><path d="M2 9.6 L9.6 2.2" stroke="#fff" stroke-width="2.8" stroke-linecap="round"/><g fill="#fff"><circle cx="2.2" cy="0.9" r="0.8"/><circle cx="4.3" cy="1.9" r="0.75"/><circle cx="11.3" cy="4.9" r="0.8"/><circle cx="11.2" cy="0.9" r="0.6"/></g><path d="M8.2 3.6 L9.2 4.6" stroke="#1a88f0" stroke-width="0.7"/></svg><span style="left:20px">初级认证审核</span></div><div class="ob" style="left:118px;top:336px;width:98px"><svg width="13" height="12" viewBox="0 0 13 12"><path d="M2 9.6 L9.6 2.2" stroke="#fff" stroke-width="2.8" stroke-linecap="round"/><g fill="#fff"><circle cx="2.2" cy="0.9" r="0.8"/><circle cx="4.3" cy="1.9" r="0.75"/><circle cx="11.3" cy="4.9" r="0.8"/><circle cx="11.2" cy="0.9" r="0.6"/></g><path d="M8.2 3.6 L9.2 4.6" stroke="#1a88f0" stroke-width="0.7"/></svg><span style="left:20px">高级认证审核</span></div><div class="ob" style="left:220px;top:336px;width:75px"><svg width="13" height="12" viewBox="0 0 13 12"><path d="M2 9.6 L9.6 2.2" stroke="#fff" stroke-width="2.8" stroke-linecap="round"/><g fill="#fff"><circle cx="2.2" cy="0.9" r="0.8"/><circle cx="4.3" cy="1.9" r="0.75"/><circle cx="11.3" cy="4.9" r="0.8"/><circle cx="11.2" cy="0.9" r="0.6"/></g><path d="M8.2 3.6 L9.2 4.6" stroke="#1a88f0" stroke-width="0.7"/></svg><span style="left:20px">充值上分</span></div><div class="ob" style="left:299px;top:336px;width:86px"><svg width="13" height="12" viewBox="0 0 13 12"><path d="M2 9.6 L9.6 2.2" stroke="#fff" stroke-width="2.8" stroke-linecap="round"/><g fill="#fff"><circle cx="2.2" cy="0.9" r="0.8"/><circle cx="4.3" cy="1.9" r="0.75"/><circle cx="11.3" cy="4.9" r="0.8"/><circle cx="11.2" cy="0.9" r="0.6"/></g><path d="M8.2 3.6 L9.2 4.6" stroke="#1a88f0" stroke-width="0.7"/></svg><span style="left:20px">更新信用分</span></div><div class="ob" style="left:389px;top:336px;width:22px;background:#18bc9c"><svg width="12" height="12" viewBox="0 0 12 12" style="left:5px;top:5px"><path d="M1 11 L1.6 8.2 L8.4 1.4 L10.6 3.6 L3.8 10.4Z" fill="#fff"/><path d="M7.6 2.2 L9.8 4.4" stroke="#18bc9c" stroke-width="0.8"/></svg></div><div class="ob" style="left:415px;top:336px;width:22px;background:#f75444"><svg width="10" height="12" viewBox="0 0 10 12" style="left:6px;top:5px"><g fill="#fff"><rect x="0" y="1.5" width="10" height="1.4"/><rect x="3.2" y="0" width="3.6" height="2"/><path d="M1 3.3 H9 L8.4 11.6 H1.6Z"/></g><g fill="#f75444"><rect x="3" y="4.5" width="0.9" height="5.6"/><rect x="4.55" y="4.5" width="0.9" height="5.6"/><rect x="6.1" y="4.5" width="0.9" height="5.6"/></g></svg></div><div class="a" style="left:0;top:371px;width:452px;height:47px;background:#fff"></div><div class="a" style="left:0;top:370px;width:452px;height:1px;background:#f2f2f2"></div><div class="ob" style="left:16px;top:383px;width:98px"><svg width="13" height="12" viewBox="0 0 13 12"><path d="M2 9.6 L9.6 2.2" stroke="#fff" stroke-width="2.8" stroke-linecap="round"/><g fill="#fff"><circle cx="2.2" cy="0.9" r="0.8"/><circle cx="4.3" cy="1.9" r="0.75"/><circle cx="11.3" cy="4.9" r="0.8"/><circle cx="11.2" cy="0.9" r="0.6"/></g><path d="M8.2 3.6 L9.2 4.6" stroke="#1a88f0" stroke-width="0.7"/></svg><span style="left:20px">初级认证审核</span></div><div class="ob" style="left:118px;top:383px;width:98px"><svg width="13" height="12" viewBox="0 0 13 12"><path d="M2 9.6 L9.6 2.2" stroke="#fff" stroke-width="2.8" stroke-linecap="round"/><g fill="#fff"><circle cx="2.2" cy="0.9" r="0.8"/><circle cx="4.3" cy="1.9" r="0.75"/><circle cx="11.3" cy="4.9" r="0.8"/><circle cx="11.2" cy="0.9" r="0.6"/></g><path d="M8.2 3.6 L9.2 4.6" stroke="#1a88f0" stroke-width="0.7"/></svg><span style="left:20px">高级认证审核</span></div><div class="ob" style="left:220px;top:383px;width:75px"><svg width="13" height="12" viewBox="0 0 13 12"><path d="M2 9.6 L9.6 2.2" stroke="#fff" stroke-width="2.8" stroke-linecap="round"/><g fill="#fff"><circle cx="2.2" cy="0.9" r="0.8"/><circle cx="4.3" cy="1.9" r="0.75"/><circle cx="11.3" cy="4.9" r="0.8"/><circle cx="11.2" cy="0.9" r="0.6"/></g><path d="M8.2 3.6 L9.2 4.6" stroke="#1a88f0" stroke-width="0.7"/></svg><span style="left:20px">充值上分</span></div><div class="ob" style="left:299px;top:383px;width:86px"><svg width="13" height="12" viewBox="0 0 13 12"><path d="M2 9.6 L9.6 2.2" stroke="#fff" stroke-width="2.8" stroke-linecap="round"/><g fill="#fff"><circle cx="2.2" cy="0.9" r="0.8"/><circle cx="4.3" cy="1.9" r="0.75"/><circle cx="11.3" cy="4.9" r="0.8"/><circle cx="11.2" cy="0.9" r="0.6"/></g><path d="M8.2 3.6 L9.2 4.6" stroke="#1a88f0" stroke-width="0.7"/></svg><span style="left:20px">更新信用分</span></div><div class="ob" style="left:389px;top:383px;width:22px;background:#18bc9c"><svg width="12" height="12" viewBox="0 0 12 12" style="left:5px;top:5px"><path d="M1 11 L1.6 8.2 L8.4 1.4 L10.6 3.6 L3.8 10.4Z" fill="#fff"/><path d="M7.6 2.2 L9.8 4.4" stroke="#18bc9c" stroke-width="0.8"/></svg></div><div class="ob" style="left:415px;top:383px;width:22px;background:#f75444"><svg width="10" height="12" viewBox="0 0 10 12" style="left:6px;top:5px"><g fill="#fff"><rect x="0" y="1.5" width="10" height="1.4"/><rect x="3.2" y="0" width="3.6" height="2"/><path d="M1 3.3 H9 L8.4 11.6 H1.6Z"/></g><g fill="#f75444"><rect x="3" y="4.5" width="0.9" height="5.6"/><rect x="4.55" y="4.5" width="0.9" height="5.6"/><rect x="6.1" y="4.5" width="0.9" height="5.6"/></g></svg></div><div class="a" style="left:0;top:418px;width:452px;height:47px;background:#f9f9f9"></div><div class="a" style="left:0;top:417px;width:452px;height:1px;background:#f2f2f2"></div><div class="ob" style="left:16px;top:430px;width:98px"><svg width="13" height="12" viewBox="0 0 13 12"><path d="M2 9.6 L9.6 2.2" stroke="#fff" stroke-width="2.8" stroke-linecap="round"/><g fill="#fff"><circle cx="2.2" cy="0.9" r="0.8"/><circle cx="4.3" cy="1.9" r="0.75"/><circle cx="11.3" cy="4.9" r="0.8"/><circle cx="11.2" cy="0.9" r="0.6"/></g><path d="M8.2 3.6 L9.2 4.6" stroke="#1a88f0" stroke-width="0.7"/></svg><span style="left:20px">初级认证审核</span></div><div class="ob" style="left:118px;top:430px;width:98px"><svg width="13" height="12" viewBox="0 0 13 12"><path d="M2 9.6 L9.6 2.2" stroke="#fff" stroke-width="2.8" stroke-linecap="round"/><g fill="#fff"><circle cx="2.2" cy="0.9" r="0.8"/><circle cx="4.3" cy="1.9" r="0.75"/><circle cx="11.3" cy="4.9" r="0.8"/><circle cx="11.2" cy="0.9" r="0.6"/></g><path d="M8.2 3.6 L9.2 4.6" stroke="#1a88f0" stroke-width="0.7"/></svg><span style="left:20px">高级认证审核</span></div><div class="ob" style="left:220px;top:430px;width:75px"><svg width="13" height="12" viewBox="0 0 13 12"><path d="M2 9.6 L9.6 2.2" stroke="#fff" stroke-width="2.8" stroke-linecap="round"/><g fill="#fff"><circle cx="2.2" cy="0.9" r="0.8"/><circle cx="4.3" cy="1.9" r="0.75"/><circle cx="11.3" cy="4.9" r="0.8"/><circle cx="11.2" cy="0.9" r="0.6"/></g><path d="M8.2 3.6 L9.2 4.6" stroke="#1a88f0" stroke-width="0.7"/></svg><span style="left:20px">充值上分</span></div><div class="ob" style="left:299px;top:430px;width:86px"><svg width="13" height="12" viewBox="0 0 13 12"><path d="M2 9.6 L9.6 2.2" stroke="#fff" stroke-width="2.8" stroke-linecap="round"/><g fill="#fff"><circle cx="2.2" cy="0.9" r="0.8"/><circle cx="4.3" cy="1.9" r="0.75"/><circle cx="11.3" cy="4.9" r="0.8"/><circle cx="11.2" cy="0.9" r="0.6"/></g><path d="M8.2 3.6 L9.2 4.6" stroke="#1a88f0" stroke-width="0.7"/></svg><span style="left:20px">更新信用分</span></div><div class="ob" style="left:389px;top:430px;width:22px;background:#18bc9c"><svg width="12" height="12" viewBox="0 0 12 12" style="left:5px;top:5px"><path d="M1 11 L1.6 8.2 L8.4 1.4 L10.6 3.6 L3.8 10.4Z" fill="#fff"/><path d="M7.6 2.2 L9.8 4.4" stroke="#18bc9c" stroke-width="0.8"/></svg></div><div class="ob" style="left:415px;top:430px;width:22px;background:#f75444"><svg width="10" height="12" viewBox="0 0 10 12" style="left:6px;top:5px"><g fill="#fff"><rect x="0" y="1.5" width="10" height="1.4"/><rect x="3.2" y="0" width="3.6" height="2"/><path d="M1 3.3 H9 L8.4 11.6 H1.6Z"/></g><g fill="#f75444"><rect x="3" y="4.5" width="0.9" height="5.6"/><rect x="4.55" y="4.5" width="0.9" height="5.6"/><rect x="6.1" y="4.5" width="0.9" height="5.6"/></g></svg></div><div class="a" style="left:0;top:465px;width:452px;height:47px;background:#fff"></div><div class="a" style="left:0;top:464px;width:452px;height:1px;background:#f2f2f2"></div><div class="ob" style="left:16px;top:477px;width:98px"><svg width="13" height="12" viewBox="0 0 13 12"><path d="M2 9.6 L9.6 2.2" stroke="#fff" stroke-width="2.8" stroke-linecap="round"/><g fill="#fff"><circle cx="2.2" cy="0.9" r="0.8"/><circle cx="4.3" cy="1.9" r="0.75"/><circle cx="11.3" cy="4.9" r="0.8"/><circle cx="11.2" cy="0.9" r="0.6"/></g><path d="M8.2 3.6 L9.2 4.6" stroke="#1a88f0" stroke-width="0.7"/></svg><span style="left:20px">初级认证审核</span></div><div class="ob" style="left:118px;top:477px;width:98px"><svg width="13" height="12" viewBox="0 0 13 12"><path d="M2 9.6 L9.6 2.2" stroke="#fff" stroke-width="2.8" stroke-linecap="round"/><g fill="#fff"><circle cx="2.2" cy="0.9" r="0.8"/><circle cx="4.3" cy="1.9" r="0.75"/><circle cx="11.3" cy="4.9" r="0.8"/><circle cx="11.2" cy="0.9" r="0.6"/></g><path d="M8.2 3.6 L9.2 4.6" stroke="#1a88f0" stroke-width="0.7"/></svg><span style="left:20px">高级认证审核</span></div><div class="ob" style="left:220px;top:477px;width:75px"><svg width="13" height="12" viewBox="0 0 13 12"><path d="M2 9.6 L9.6 2.2" stroke="#fff" stroke-width="2.8" stroke-linecap="round"/><g fill="#fff"><circle cx="2.2" cy="0.9" r="0.8"/><circle cx="4.3" cy="1.9" r="0.75"/><circle cx="11.3" cy="4.9" r="0.8"/><circle cx="11.2" cy="0.9" r="0.6"/></g><path d="M8.2 3.6 L9.2 4.6" stroke="#1a88f0" stroke-width="0.7"/></svg><span style="left:20px">充值上分</span></div><div class="ob" style="left:299px;top:477px;width:86px"><svg width="13" height="12" viewBox="0 0 13 12"><path d="M2 9.6 L9.6 2.2" stroke="#fff" stroke-width="2.8" stroke-linecap="round"/><g fill="#fff"><circle cx="2.2" cy="0.9" r="0.8"/><circle cx="4.3" cy="1.9" r="0.75"/><circle cx="11.3" cy="4.9" r="0.8"/><circle cx="11.2" cy="0.9" r="0.6"/></g><path d="M8.2 3.6 L9.2 4.6" stroke="#1a88f0" stroke-width="0.7"/></svg><span style="left:20px">更新信用分</span></div><div class="ob" style="left:389px;top:477px;width:22px;background:#18bc9c"><svg width="12" height="12" viewBox="0 0 12 12" style="left:5px;top:5px"><path d="M1 11 L1.6 8.2 L8.4 1.4 L10.6 3.6 L3.8 10.4Z" fill="#fff"/><path d="M7.6 2.2 L9.8 4.4" stroke="#18bc9c" stroke-width="0.8"/></svg></div><div class="ob" style="left:415px;top:477px;width:22px;background:#f75444"><svg width="10" height="12" viewBox="0 0 10 12" style="left:6px;top:5px"><g fill="#fff"><rect x="0" y="1.5" width="10" height="1.4"/><rect x="3.2" y="0" width="3.6" height="2"/><path d="M1 3.3 H9 L8.4 11.6 H1.6Z"/></g><g fill="#f75444"><rect x="3" y="4.5" width="0.9" height="5.6"/><rect x="4.55" y="4.5" width="0.9" height="5.6"/><rect x="6.1" y="4.5" width="0.9" height="5.6"/></g></svg></div><div class="a" style="left:0;top:511px;width:452px;height:1px;background:#eee"></div></div>
<div class="a" style="left:259px;top:818px;line-height:18px;color:#333;white-space:nowrap">显示第 1 到第 10 条记录，总共 39 条记录 每页显示</div><div class="btn" style="left:582px;top:813px;width:52px;height:33px;background:#f4f4f4;border:1px solid #ddd"></div><div class="a" style="left:596px;top:819px;line-height:18px;font-size:13px;color:#333">10</div><svg class="a" style="left:613px;top:827.5px" width="8" height="5" viewBox="0 0 8 5"><path d="M0 4.5 H8 L4 0Z" fill="#333"/></svg><div class="a" style="left:639px;top:818px;line-height:18px;color:#333;white-space:nowrap">条记录</div><div class="a" style="left:1121px;top:811px;width:265px;height:34px;border:1px solid #ddd;border-radius:3px;background:#fafafa"></div><div class="a" style="left:1121px;top:811px;width:67px;height:34px;color:#555;text-align:center;line-height:35px">上一页</div><div class="a" style="left:1188px;top:811px;width:34px;height:34px;background:#444c69;color:#fff;text-align:center;line-height:35px">1</div><div class="a" style="left:1222px;top:811px;width:1px;height:34px;background:#ddd"></div><div class="a" style="left:1222px;top:811px;width:32px;height:34px;color:#555;text-align:center;line-height:35px">2</div><div class="a" style="left:1253px;top:811px;width:1px;height:34px;background:#ddd"></div><div class="a" style="left:1254px;top:811px;width:32px;height:34px;color:#555;text-align:center;line-height:35px">3</div><div class="a" style="left:1286px;top:811px;width:1px;height:34px;background:#ddd"></div><div class="a" style="left:1286px;top:811px;width:34px;height:34px;color:#555;text-align:center;line-height:35px">4</div><div class="a" style="left:1320px;top:811px;width:1px;height:34px;background:#ddd"></div><div class="a" style="left:1320px;top:811px;width:66px;height:34px;color:#555;text-align:center;line-height:35px">下一页</div><div class="inp" style="left:1392px;top:811px;width:50px;height:34px"></div><div class="btn" style="left:1447px;top:812px;width:51px;height:32px;background:#f4f4f4;border:1px solid #ddd;color:#333;text-align:center;line-height:29px;font-size:13px">跳转</div><div class="a" style="left:1529px;top:47px;width:8px;height:803px;background:#fafafa"></div><div class="a" style="left:1532px;top:65px;width:10px;height:736px;border-radius:5px;background:#8a8a8a"></div><svg class="a" style="left:1531px;top:52px" width="6" height="6" viewBox="0 0 6 6"><path d="M1 5.5 L6 0.5 V5.5Z" fill="#8a8a8a"/></svg><svg class="a" style="left:1531px;top:839px" width="6" height="6" viewBox="0 0 6 6"><path d="M1 0.5 L6 5.5 V0.5Z" fill="#8a8a8a"/></svg>
<svg class="a" style="left:618px;top:275px" width="302" height="302" viewBox="618 275 302 302"><circle cx="768.2" cy="425.2" r="139.7" fill="none" stroke="#f00" stroke-width="5.3"/><text transform="translate(663.33,443.58) rotate(-100.0) scale(0.72,1)" text-anchor="middle" font-family="Liberation Sans" font-weight="bold" font-size="28" fill="#f00">w</text><text transform="translate(662.03,416.60) rotate(-85.5) scale(0.72,1)" text-anchor="middle" font-family="Liberation Sans" font-weight="bold" font-size="28" fill="#f00">w</text><text transform="translate(668.15,388.40) rotate(-70.0) scale(0.72,1)" text-anchor="middle" font-family="Liberation Sans" font-weight="bold" font-size="28" fill="#f00">w</text><text transform="translate(679.99,365.17) rotate(-56.0)" text-anchor="middle" font-family="Liberation Sans" font-weight="bold" font-size="26" fill="#f00">.</text><text transform="translate(702.82,340.68) rotate(-38.0)" text-anchor="middle" font-family="Liberation Sans" font-size="28" fill="#f00" stroke="#f00" stroke-width="0.5">5</text><text transform="translate(728.62,325.79) rotate(-22.0)" text-anchor="middle" font-family="Liberation Sans" font-size="28" fill="#f00" stroke="#f00" stroke-width="0.5">1</text><text transform="translate(757.52,318.59) rotate(-6.0)" text-anchor="middle" font-family="Liberation Sans" font-size="28" fill="#f00" stroke="#f00" stroke-width="0.5">5</text><text transform="translate(787.28,319.63) rotate(10.0)" text-anchor="middle" font-family="Liberation Sans" font-size="28" fill="#f00" stroke="#f00" stroke-width="0.5">y</text><text transform="translate(817.28,329.66) rotate(27.0) scale(0.72,1)" text-anchor="middle" font-family="Liberation Sans" font-weight="bold" font-size="28" fill="#f00">m</text><text transform="translate(838.19,343.64) rotate(40.5)" text-anchor="middle" font-family="Liberation Sans" font-weight="bold" font-size="26" fill="#f00">.</text><text transform="translate(859.83,368.93) rotate(58.4) scale(0.85,1)" text-anchor="middle" font-family="Liberation Sans" font-weight="bold" font-size="28" fill="#f00">c</text><text transform="translate(872.05,397.31) rotate(75.0) scale(0.85,1)" text-anchor="middle" font-family="Liberation Sans" font-weight="bold" font-size="28" fill="#f00">o</text><text transform="translate(875.68,426.87) rotate(91.0) scale(0.72,1)" text-anchor="middle" font-family="Liberation Sans" font-weight="bold" font-size="28" fill="#f00">m</text><text transform="translate(709.68,540.83) rotate(27.0)" text-anchor="middle" font-family="Liberation Sans" font-style="italic" font-size="13" fill="#f00">5</text><text transform="translate(723.17,546.77) rotate(20.5)" text-anchor="middle" font-family="Liberation Sans" font-style="italic" font-size="13" fill="#f00">1</text><text transform="translate(737.25,551.14) rotate(14.0)" text-anchor="middle" font-family="Liberation Sans" font-style="italic" font-size="13" fill="#f00">5</text><text transform="translate(751.73,553.89) rotate(7.5)" text-anchor="middle" font-family="Liberation Sans" font-style="italic" font-size="13" fill="#f00">y</text><text transform="translate(766.43,554.98) rotate(1.0)" text-anchor="middle" font-family="Liberation Sans" font-style="italic" font-size="13" fill="#f00">m</text><text transform="translate(781.16,554.40) rotate(-5.5)" text-anchor="middle" font-family="Liberation Sans" font-style="italic" font-size="13" fill="#f00">.</text><text transform="translate(795.73,552.16) rotate(-12.0)" text-anchor="middle" font-family="Liberation Sans" font-style="italic" font-size="13" fill="#f00">c</text><text transform="translate(809.95,548.28) rotate(-18.5)" text-anchor="middle" font-family="Liberation Sans" font-style="italic" font-size="13" fill="#f00">o</text><text transform="translate(823.64,542.82) rotate(-25.0)" text-anchor="middle" font-family="Liberation Sans" font-style="italic" font-size="13" fill="#f00">m</text><text transform="translate(704.8,438.5) scale(0.9,1)" text-anchor="middle" font-family="Liberation Sans" font-size="39" fill="#f00" stroke="#f00" stroke-width="1.3">5</text><text transform="translate(748.9,438.5) scale(0.9,1)" text-anchor="middle" font-family="Liberation Sans" font-size="39" fill="#f00" stroke="#f00" stroke-width="1.3">5</text><path d="M727.6 411 V438.5 M727.6 412.5 Q724 417.5 718.5 419.5" fill="none" stroke="#f00" stroke-width="4.8"/><text transform="translate(803.5,438.5) rotate(-4)" text-anchor="middle" font-family="Liberation Sans" font-size="36" fill="#f00" stroke="#f00" stroke-width="0.9">源码</text><text transform="translate(700.2,505.5) scale(0.8,1)" text-anchor="middle" font-family="Liberation Sans" font-weight="bold" font-size="28" fill="#f00" stroke="#f00" stroke-width="0.3">5</text><text transform="translate(717.3,505.5) scale(0.8,1)" text-anchor="middle" font-family="Liberation Sans" font-weight="bold" font-size="28" fill="#f00" stroke="#f00" stroke-width="0.3">1</text><text transform="translate(734.3,505.5) scale(0.8,1)" text-anchor="middle" font-family="Liberation Sans" font-weight="bold" font-size="28" fill="#f00" stroke="#f00" stroke-width="0.3">5</text><text transform="translate(752.5,505.5) scale(0.8,1)" text-anchor="middle" font-family="Liberation Sans" font-weight="bold" font-size="28" fill="#f00" stroke="#f00" stroke-width="0.3">y</text><text transform="translate(769.6,505.5) scale(0.7,1)" text-anchor="middle" font-family="Liberation Sans" font-weight="bold" font-size="28" fill="#f00" stroke="#f00" stroke-width="0.3">m</text><text transform="translate(783.4,505.5) scale(0.8,1)" text-anchor="middle" font-family="Liberation Sans" font-weight="bold" font-size="28" fill="#f00" stroke="#f00" stroke-width="0.3">.</text><text transform="translate(803.5,505.5) scale(0.8,1)" text-anchor="middle" font-family="Liberation Sans" font-weight="bold" font-size="28" fill="#f00" stroke="#f00" stroke-width="0.3">c</text><text transform="translate(819.9,505.5) scale(0.8,1)" text-anchor="middle" font-family="Liberation Sans" font-weight="bold" font-size="28" fill="#f00" stroke="#f00" stroke-width="0.3">o</text><text transform="translate(838.4,505.5) scale(0.7,1)" text-anchor="middle" font-family="Liberation Sans" font-weight="bold" font-size="28" fill="#f00" stroke="#f00" stroke-width="0.3">m</text></svg>
</body></html>
